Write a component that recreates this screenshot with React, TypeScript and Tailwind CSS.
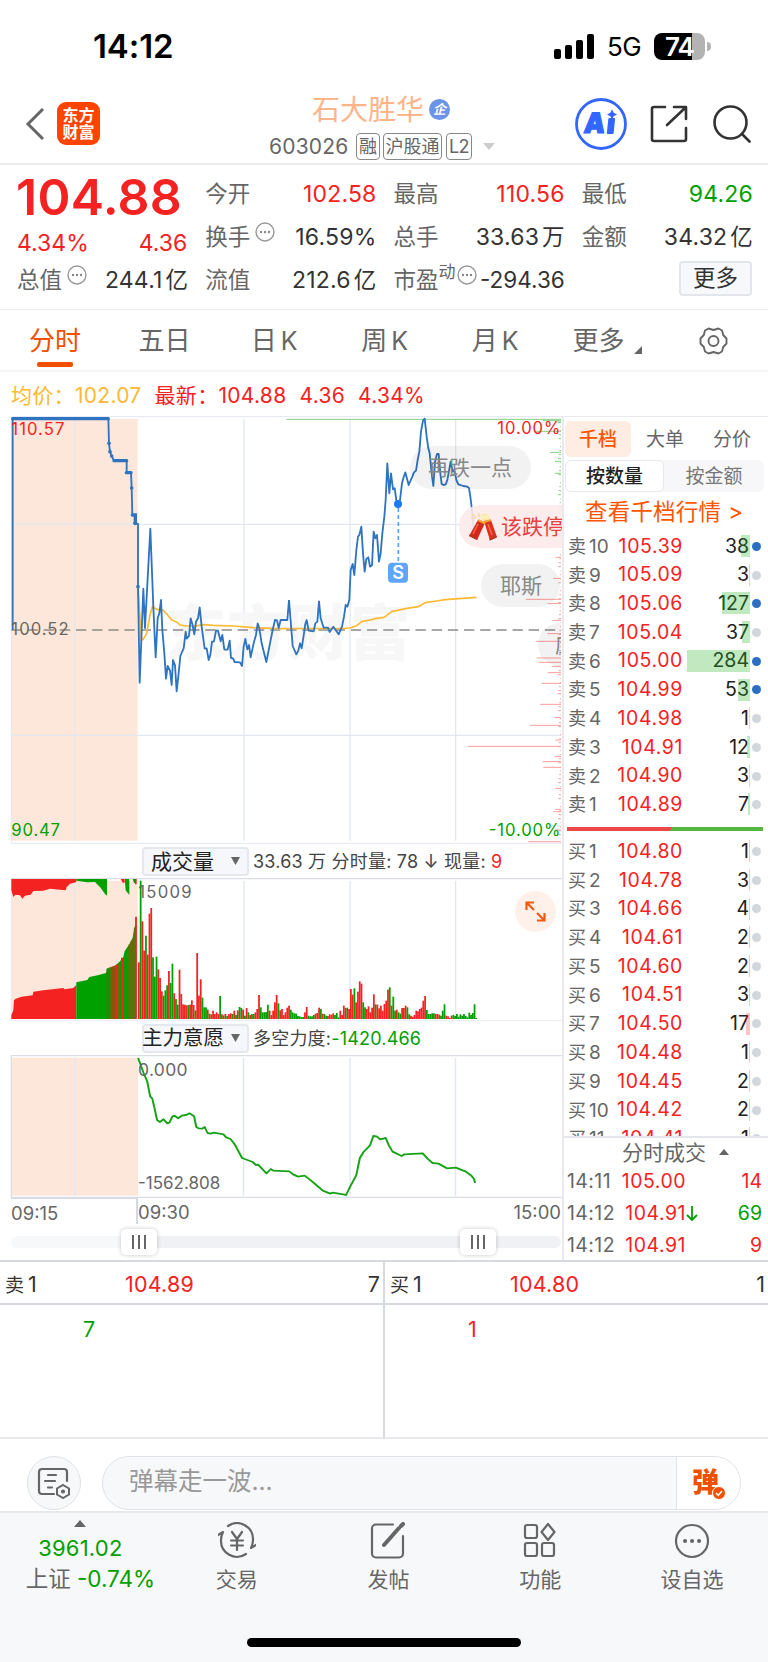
import type { ReactNode } from 'react'

const RED = '#f52222'
const GREEN = '#00a000'

const morning =
  '38,690 38,56 325,56 327,130 330,155 335,168 342,182 380,183 380,218 393,219 395,264 397,345 406,345 405,370 414,372 414,560 419,848 430,566 435,684 451,386 460,620 467,772 473,655 478,640 483,600 487,690 493,760 498,836 503,798 510,812 515,855 519,780 525,796 530,874 537,810 541,768 551,745 557,695 560,716 567,708 572,655 577,672 583,703 588,665 594,655 599,622 605,680 614,746 620,745 626,780 631,765 636,725 642,724 648,692 654,692 662,724 667,705 673,749 683,749 689,722 693,774 699,775 704,786 720,787 726,798 731,740 736,717 742,748 747,735 752,772 762,725 768,705 773,670 778,685 785,730 799,786 810,730 818,690 825,660 831,661 836,684 842,660 862,660 867,600'

const afternoon =
  '27,600 35,700 38,738 49,763 55,752 60,730 65,745 72,700 76,672 80,660 86,692 101,694 106,670 112,665 117,604 122,655 131,683 144,683 149,696 160,680 176,703 186,680 192,650 197,615 202,620 208,600 212,510 218,492 223,525 229,450 234,410 238,405 244,380 249,460 254,515 259,477 265,472 270,500 276,496 281,395 286,415 291,405 297,485 302,460 307,400 313,350 317,300 322,190 328,280 333,220 339,268 344,265 349,300 355,310 360,300 366,250 370,235 376,217 386,255 397,230 402,217 408,212 413,180 418,155 423,95 429,62 434,56 440,110 445,145 449,160 455,220 460,258 465,185 471,162 476,162 481,220 485,252 490,255 497,253 502,240 512,185 518,215 523,210 529,240 535,253 550,258 562,260 567,264 571,290 576,330 581,385'

const average =
  '414,560 419,640 424,722 430,717 440,700 450,645 457,620 470,628 490,631 503,645 515,660 530,666 540,675 560,678 590,678 605,674 640,676 700,678 760,683 830,686 1035,685 1050,684 1070,677 1085,665 1110,660 1125,656 1152,652 1175,635 1220,625 1255,620 1275,608 1310,603 1335,599 1430,592'

const intent =
  '380,130 395,175 405,200 413,245 419,252 427,290 432,316 440,322 450,314 460,326 466,324 474,306 480,303 490,311 500,303 512,301 521,296 534,305 540,337 546,341 556,342 563,337 571,355 580,357 588,354 615,359 622,368 634,373 645,388 655,408 666,430 695,442 704,451 710,450 733,476 745,463 752,468 796,470 806,479 820,486 838,483 855,497 870,511 888,528 908,537 915,534 948,540 952,541 965,512 980,482 990,430 1000,412 1018,392 1027,364 1036,365 1046,374 1061,370 1070,393 1080,411 1105,424 1112,419 1163,416 1176,432 1190,445 1206,447 1230,461 1254,459 1280,470 1297,483 1304,493 1307,505'

// one bar per minute from 09:30, negative = falling minute
const volume = [
  170, -415, 293, 205, -250, 193, 316, 333, -185, -127, -187, 149, 123, 83, -70, -86, -101, 144, -108, -166, 77, -60, -43,
  148, 75, 44, 43, 41, -42, 43, 56, 42, -26, 198, 70, 119, -64, -35, -35, 28, -16, 14, 25, 15, 20, 15, -69, 14, -11, 15, -9,
  15, 17, -15, 25, -12, 26, -36, -33, 28, -10, 33, -20, 12, -15, -15, 20, 30, 72, -35, -20, -20, -21, -43, 25, 12, 25, 50,
  72, -47, 26, 30, 12, 20, 34, 40, -28, -20, -17, -16, -9, -8, -6, -6, 20, 36, -10, -8, -8, -12, 16, 18, 34,
  -30, 16, -15, -10, 9, 14, 13, 17, -12, -18, -5, 25, 12, 40, 33, -34, 30, 90, 73, -92, 50, 82, 113, 106, -50, -35, 30, 38,
  20, 34, 74, -44, 43, 32, 40, 25, 45, 55, 88, -95, 40, -67, -25, 28, -20, -16, 33, 33, 40, -35, -14, 10, 7, 12, 25, 23, 30,
  34, 55, 69, -27, -15, -15, -17, -17, 15, 15, 13, -10, -25, -44, 10, 8, 3, 10, -12, -9, -15, -7, -14, -10, -15, -9, -5,
  -19, -12, -18, -44, -3,
]

// [y, left edge] of the price distribution ticks
const greenTicks = [
  [58, 19], [62, 788], [66, 826], [94, 765], [157, 810], [184, 825], [220, 825], [382, 785], [408, 762],
]
const redTicks = [
  [472, 827], [535, 820], [598, 738], [611, 803], [661, 817], [701, 802], [724, 768], [774, 770], [787, 776], [799, 816],
  [818, 803], [850, 785], [881, 833], [913, 780], [953, 824], [976, 750], [1020, 826], [1039, 563], [1070, 824],
  [1085, 788], [1102, 790], [1165, 826], [1228, 826], [1235, 820], [1290, 825], [1325, 745],
]

interface Level {
  label: string
  price: string
  qty: number
  bar: number
  active?: boolean
}

const sells: Level[] = [
  { label: '10', price: '105.39', qty: 38, bar: 9, active: true },
  { label: '9', price: '105.09', qty: 3, bar: 1 },
  { label: '8', price: '105.06', qty: 127, bar: 28, active: true },
  { label: '7', price: '105.04', qty: 37, bar: 8 },
  { label: '6', price: '105.00', qty: 284, bar: 63, active: true },
  { label: '5', price: '104.99', qty: 53, bar: 12, active: true },
  { label: '4', price: '104.98', qty: 1, bar: 1 },
  { label: '3', price: '104.91', qty: 12, bar: 3 },
  { label: '2', price: '104.90', qty: 3, bar: 1 },
  { label: '1', price: '104.89', qty: 7, bar: 2 },
]

const buys: Level[] = [
  { label: '1', price: '104.80', qty: 1, bar: 1 },
  { label: '2', price: '104.78', qty: 3, bar: 1 },
  { label: '3', price: '104.66', qty: 4, bar: 1 },
  { label: '4', price: '104.61', qty: 2, bar: 1 },
  { label: '5', price: '104.60', qty: 2, bar: 1 },
  { label: '6', price: '104.51', qty: 3, bar: 1 },
  { label: '7', price: '104.50', qty: 17, bar: 4 },
  { label: '8', price: '104.48', qty: 1, bar: 1 },
  { label: '9', price: '104.45', qty: 2, bar: 1 },
  { label: '10', price: '104.42', qty: 2, bar: 1 },
  { label: '11', price: '104.41', qty: 1, bar: 1 },
]

function StatusBar() {
  return (
    <div className="flex h-[84px] items-center justify-between pl-[93px] pr-[57px] pt-[9px]">
      <span className="text-[33px] font-semibold leading-none tracking-[-0.1px] text-black">14:12</span>
      <div className="flex items-center">
        <svg width="40" height="26" viewBox="0 0 40 26">
          <rect x="0" y="15" width="7" height="10" rx="2" />
          <rect x="11" y="11" width="7" height="14" rx="2" />
          <rect x="22" y="6" width="7" height="19" rx="2" />
          <rect x="33" y="0" width="7" height="25" rx="2" />
        </svg>
        <span className="ml-[13px] w-[34px] whitespace-nowrap text-[26px] leading-none tracking-[-0.5px]">5G</span>
        <div className="ml-[13px] flex items-center">
          <div className="flex h-[27px] w-[51px] items-center justify-center rounded-[8px] bg-[linear-gradient(90deg,#000_74%,#b3b3b3_74%)] text-[26px] font-semibold leading-none tracking-[-1px] text-white">
            74
          </div>
          <div className="ml-[2px] h-[9px] w-[4px] rounded-r-full bg-[#b3b3b3]" />
        </div>
      </div>
    </div>
  )
}

function Header() {
  return (
    <header className="flex h-[81px] items-center border-b-2 border-[#ededed] pl-[25px]">
      <svg className="shrink-0" width="20" height="32" viewBox="0 0 20 32" fill="none" stroke="#666" strokeWidth="3">
        <path d="M18 1 3 16l15 15" />
      </svg>
      <div className="ml-3 flex h-[43px] w-[43px] shrink-0 flex-col items-center justify-center rounded-[9px] bg-[#ff4400] text-[16px] font-bold leading-[17px] text-white">
        <span>东方</span>
        <span>财富</span>
      </div>
      <div className="ml-[169px] flex w-[226px] shrink-0 flex-col pt-[5px]">
        <div className="flex h-[36px] items-center pl-[43px]">
          <span className="text-[28px] leading-none text-[#ffb48a]">石大胜华</span>
          <span className="ml-[5px] flex h-[21px] w-[21px] items-center justify-center rounded-full bg-[#6b93e8] text-[13px] font-bold italic leading-none text-white">
            企
          </span>
        </div>
        <div className="mt-[5px] flex h-[28px] items-center text-[21px] leading-none text-[#666]">
          <span className="w-[87px] whitespace-nowrap tracking-[0.2px]">603026</span>
          <span className="flex h-[27px] w-[24px] items-center justify-center rounded-[4px] border border-[#888] text-[18px]">融</span>
          <span className="ml-[3px] flex h-[27px] w-[59px] items-center justify-center rounded-[4px] border border-[#888] text-[18px]">沪股通</span>
          <span className="ml-[4px] flex h-[27px] w-[26px] items-center justify-center rounded-[4px] border border-[#888] text-[18px] tracking-[-0.5px]">L2</span>
          <svg className="ml-[11px]" width="12" height="7" viewBox="0 0 12 7" fill="#ccc">
            <path d="M0 0h12L6 7z" />
          </svg>
        </div>
      </div>
      <svg className="ml-[80px] shrink-0" width="52" height="52" viewBox="0 0 52 52">
        <circle cx="26" cy="26" r="24.500" fill="#fff" stroke="#3366ff" strokeWidth="2.800" />
        <g transform="translate(4 0) skewX(-6)" fill="#3366ff">
          <text x="8" y="35" fontSize="28" fontWeight="900" stroke="#3366ff" strokeWidth="1.200" textLength="21" lengthAdjust="spacingAndGlyphs">A</text>
          <rect x="31.500" y="20" width="6.800" height="16" rx="1" />
        </g>
        <path d="M37 11.500l1.700 3.300 3.300 1.700-3.300 1.700-1.700 3.300-1.700-3.300-3.300-1.700 3.300-1.700z" fill="#3366ff" />
      </svg>
      <svg className="ml-[23px] shrink-0" width="38" height="38" viewBox="0 0 38 38" fill="none" stroke="#333" strokeWidth="2.600" strokeLinecap="round" strokeLinejoin="round">
        <path d="M15 2H4a2 2 0 0 0-2 2v30a2 2 0 0 0 2 2h30a2 2 0 0 0 2-2V23" />
        <path d="M24 2h12v12M35 3 17 20" />
      </svg>
      <svg className="ml-[25px] shrink-0" width="38" height="38" viewBox="0 0 38 38" fill="none" stroke="#333" strokeWidth="2.600" strokeLinecap="round">
        <circle cx="17.500" cy="17.500" r="16" />
        <path d="m29 29 7.500 7.500" />
      </svg>
    </header>
  )
}

function MoreDots() {
  return (
    <svg className="mb-3 ml-[5px] shrink-0" width="20" height="20" viewBox="0 0 20 20">
      <circle cx="10" cy="10" r="9" fill="none" stroke="#999" strokeWidth="1.400" />
      <circle cx="6" cy="10" r="1.200" fill="#888" />
      <circle cx="10" cy="10" r="1.200" fill="#888" />
      <circle cx="14" cy="10" r="1.200" fill="#888" />
    </svg>
  )
}

interface StatProps {
  label: string
  value: string
  unit?: string
  tone?: string
  dots?: boolean
}

function Stat({ label, value, unit, tone = 'text-[#333]', dots }: StatProps) {
  return (
    <div className="flex h-[43px] items-center whitespace-nowrap text-[22.500px] leading-none">
      <span className="text-[#666]">{label}</span>
      {dots && <MoreDots />}
      <span className={`-mr-px ml-auto text-[23px] tracking-[0.2px] ${tone}`}>
        {value}
        {unit && <span className="ml-[3px] text-[22.500px]">{unit}</span>}
      </span>
    </div>
  )
}

function Quote() {
  return (
    <section className="grid h-[145px] grid-cols-4 gap-x-[18px] border-b border-[#eee] pl-[17px] pr-[16px] pt-[8px]">
      <div>
        <div className="h-[86px] text-[#f52222]">
          <div className="-ml-px flex h-[48px] items-center text-[50px] font-semibold leading-none tracking-[0.3px]">104.88</div>
          <div className="mt-[11px] flex items-center justify-between text-[23px] leading-none">
            <span>4.34%</span>
            <span>4.36</span>
          </div>
        </div>
        <Stat label="总值" value="244.1" unit="亿" dots />
      </div>
      <div>
        <Stat label="今开" value="102.58" tone="text-[#f52222]" />
        <Stat label="换手" value="16.59%" dots />
        <Stat label="流值" value="212.6" unit="亿" />
      </div>
      <div>
        <Stat label="最高" value="110.56" tone="text-[#f52222]" />
        <Stat label="总手" value="33.63" unit="万" />
        <div className="flex h-[43px] items-center whitespace-nowrap text-[22.500px] leading-none">
          <span className="text-[#666]">市盈</span>
          <span className="mb-4 text-[17px] text-[#666]">动</span>
          <span className="-ml-[4px] flex"><MoreDots /></span>
          <span className="-mr-px ml-auto text-[#333]">-294.36</span>
        </div>
      </div>
      <div>
        <Stat label="最低" value="94.26" tone="text-[#00a000]" />
        <Stat label="金额" value="34.32" unit="亿" />
        <button className="ml-auto mt-[2px] flex h-[35px] w-[73px] items-center justify-center rounded-[4px] border-2 border-[#e3e5ec] bg-[#f7f8fb] text-[22.500px] leading-none text-[#333]">
          更多
        </button>
      </div>
    </section>
  )
}

function PeriodTabs() {
  return (
    <nav className="flex h-[62px] items-start border-b-2 border-[#f5f5f5] text-[26px] leading-none text-[#666]">
      <div className="flex w-[110px] flex-col items-center pt-[18px] text-[#f05000]">
        <span>分时</span>
        <span className="mt-[8px] h-[5px] w-[36px] rounded-[2px] bg-[#f05000]" />
      </div>
      <span className="w-[109px] pt-[18px] text-center">五日</span>
      {['日', '周', '月'].map((unit) => (
        <span key={unit} className="w-[110.500px] pt-[18px] text-center">
          {unit}
          <span className="ml-[4px] text-[25px]">K</span>
        </span>
      ))}
      <div className="flex w-[111px] items-end pl-[22px] pt-[18px]">
        <span>更多</span>
        <svg className="ml-[9px]" width="8" height="8" viewBox="0 0 8 8" fill="#666">
          <path d="M8 0v8H0z" />
        </svg>
      </div>
      <svg className="ml-[37px] mt-[17px]" width="29" height="28" viewBox="0 0 29 28" fill="none" stroke="#666" strokeWidth="1.900" strokeLinejoin="round">
        <path d="M9.500 1.500 14.500 3l5-1.500 3.500 2 1.200 4.500 3.300 3.500v5L24.200 20 23 24.500l-3.500 2-5-1.500-5 1.500-3.500-2L4.800 20 1.500 16.500v-5L4.800 8 6 3.500z" />
        <circle cx="14.500" cy="14" r="5" />
      </svg>
    </nav>
  )
}

function PriceChart() {
  return (
    <div className="relative h-[428px] overflow-hidden">
      <svg className="block" width="562" height="428" viewBox="0 48 1686 1284" fill="none">
        <rect x="34" y="57" width="379" height="1265" fill="#fde6da" />
        <g stroke="#e3e7f0" strokeWidth="4">
          <path d="M34 50H1686M34 1330H1686M34 50V1330" strokeWidth="3" />
          <path d="M34 373H1684M34 1006H1684M224 57V1322M732 57V1322M1050 57V1322M1367 57V1322" />
        </g>
        <text x="496" y="766" fontSize="182" fontWeight="900" fill="#f7f7f8" textLength="735">东方财富</text>
        <path d="M34 690H1684" stroke="#8c8c8c" strokeWidth="5" strokeDasharray="31 17.500" />
        <g transform="translate(840 0)" strokeWidth="3">
          {greenTicks.map(([y, x]) => (
            <path key={y} d={`M${x} ${y}H843`} stroke="#83d183" />
          ))}
          {redTicks.map(([y, x]) => (
            <path key={y} d={`M${x} ${y}H843`} stroke="#ff9c9c" />
          ))}
          {Array.from({ length: 105 }, (_, i) => (
            <path
              key={i}
              d={`M${834 + ((i * 7) % 9)} ${68 + i * 12}H843`}
              stroke={i < 29 ? '#83d183' : '#ff9c9c'}
            />
          ))}
        </g>
        <polyline points={average} stroke="#fdb933" strokeWidth="5" strokeLinejoin="round" />
        <polyline points={morning} stroke="#2f74c0" strokeWidth="5.500" strokeLinejoin="round" />
        <path d="M38 56H325M342 182H380M379 218H393M397 345H406V370" stroke="#2f74c0" strokeWidth="10" strokeLinecap="round" />
        {[[327, 130], [330, 155], [335, 168], [395, 264], [405, 370], [414, 560]].map(([cx, cy]) => (
          <circle key={cy} cx={cx} cy={cy} r="5.500" fill="#2f74c0" />
        ))}
        <g transform="translate(840 0)">
          <polyline points={afternoon} stroke="#2f74c0" strokeWidth="5.500" strokeLinejoin="round" />
          <path d="M355 324V488" stroke="#5ba0f8" strokeWidth="5" strokeDasharray="12 9" />
          <circle cx="354" cy="312" r="12" fill="#1f7bf5" />
          <rect x="324" y="488" width="60" height="60" rx="12" fill="#5fa5fb" />
          <text x="354" y="537" fontSize="54" fontWeight="600" fill="#fff" textAnchor="middle">S</text>
        </g>
        <g fontSize="50">
          <text x="34" y="104" fill={RED} textLength="159">110.57</text>
          <text x="34" y="706" fill="#666" textLength="172">100.52</text>
          <text x="34" y="1309" fill={GREEN} textLength="146">90.47</text>
          <text x="1492" y="102" fill={RED} textLength="189">10.00%</text>
          <text x="1466" y="1309" fill={GREEN} textLength="215">-10.00%</text>
        </g>
      </svg>
      <div className="absolute left-[410px] top-[30px] flex h-[43px] w-[121px] items-center rounded-full bg-black/5 pl-[18px] text-[21px] leading-none text-[#888]">
        再跌一点
      </div>
      <div className="absolute left-[459px] top-[89px] flex h-[43px] w-[103px] items-center overflow-hidden whitespace-nowrap rounded-l-full bg-[#fdeaea]/90 pl-[9px] text-[21px] leading-none text-[#e84040]">
        <svg className="mr-[3px] shrink-0" width="30" height="30" viewBox="0 0 30 30">
          <path d="m4 2 4 3M10 1l2 4M3 6h5" stroke="#f7d9a8" strokeWidth="1.500" />
          <circle cx="17" cy="5" r="3.600" fill="#fbe59a" />
          <path d="m17 0 1 4 3-2-1.500 3.500L23 7h-12l3-1.500L12.500 2l3.500 2z" fill="#fdf0b5" />
          <path d="m10 8 7 3-8 17-8-4z" fill="#d5271a" />
          <path d="m16 9 7-1 6 17-7 3.500z" fill="#dc2f1f" />
          <path d="m10 8 7 3.500M16 10l7-2" stroke="#f0a636" strokeWidth="2" />
          <path d="m1.500 23 8 4M21.500 27.500l7-3" stroke="#b9351b" strokeWidth="2" />
          <path d="m10 12-5 10M20 12l4 11" stroke="#f96a4a" strokeWidth="1.500" />
        </svg>
        该跌停
      </div>
      <div className="absolute left-[481px] top-[148px] flex h-[43px] w-[79px] items-center rounded-full bg-black/5 pl-[19px] text-[21px] leading-none text-[#888]">
        耶斯
      </div>
      <div className="absolute left-[538px] top-[207px] flex h-[43px] w-[23px] items-center overflow-hidden whitespace-nowrap rounded-l-full bg-black/5 pl-[17px] text-[21px] leading-none text-[#888]">
        应
      </div>
    </div>
  )
}

function IndicatorBar({ name, children }: { name: string; children: ReactNode }) {
  return (
    <div className="flex h-[34px] items-center pl-[142px]">
      <div className="flex h-[29px] w-[107px] shrink-0 items-center justify-between whitespace-nowrap rounded-[4px] border-2 border-[#e4e7ee] bg-[#f6f7fa] text-[21px] leading-none text-[#222]">
        <span className={name.length > 3 ? '-ml-[2px] text-[20.500px]' : 'ml-[7px]'}>{name}</span>
        <svg className="mr-[7px]" width="9" height="8" viewBox="0 0 9 8" fill="#666">
          <path d="M0 0h9L4.500 8z" />
        </svg>
      </div>
      <div className="ml-[4px] flex items-center whitespace-pre pt-px text-[18px] leading-none tracking-[0.200px] text-[#444]">
        {children}
      </div>
    </div>
  )
}

function VolumeChart() {
  return (
    <div className="relative h-[143px]">
      <svg className="block" width="562" height="143" viewBox="0 113 1686 429" fill="none">
        <rect x="34" y="116" width="379" height="420" fill="#fde6da" />
        <path d="M34 541H1686M34 115V541" stroke="#e8eaf0" strokeWidth="3" />
        <path d="M34 115H1686" stroke="#dadde6" strokeWidth="4" />
        <path d="M224 122V536M732 122V536M1050 122V536M1367 122V536" stroke="#e3e7f0" strokeWidth="4" />
        <path d="M34 116V150L40 170 46 163 60 165 67 175 75 166 92 163 100 152 130 151 150 145 188 149 197 150 200 140 210 130 229 125V116z" fill={RED} />
        <path d="M229 116V121L262 126 285 125 300 140 318 165H321V116zM374 116 377 150 388 164V116z" fill={GREEN} />
        <path d="M321 119H374M388 119H400" stroke="#fff" strokeWidth="5" />
        <path d="M362 116 368 127H374V116zM405 116V132H410V116z" fill={RED} />
        <path d="M398 116 402 128H407V116z" fill={GREEN} />
        <path d="M34 536V525L40 510 42 480 47 475 65 469 98 465 100 454 130 450 190 443 193 447 220 443 229 434V536z" fill={RED} />
        <path d="M229 536V426L262 419 268 410 293 405 318 398 320 385 345 376 358 365 370 350 374 332 388 312 398 292 403 262 408 250V536z" fill={GREEN} />
        <path d="M322 384V536M328 381V536M333 379V536M338 378V536M343 376V536" stroke="#b83a12" strokeWidth="2.600" />
        <path d="M350 373V536M366 352V536" stroke={RED} strokeWidth="6" />
        <path d="M355 368V536M387 312V536M392 304V536M397 296V536M403 262V536" stroke="#8a5c10" strokeWidth="2.500" />
        <path d="M408 229V536" stroke={RED} strokeWidth="5.500" />
        <text x="415" y="173" fontSize="50" fill="#666" textLength="160">15009</text>
        {volume.map((v, i) => (
          <rect
            key={i}
            x={414 + i * 5.3}
            y={536 - Math.abs(v)}
            width="5.300"
            height={Math.abs(v)}
            fill={v > 0 ? RED : GREEN}
          />
        ))}
      </svg>
      <div className="absolute left-[515px] top-[13px] flex h-[41px] w-[41px] items-center justify-center rounded-full bg-[#fff1ea]">
        <svg width="21" height="21" viewBox="0 0 21 21" fill="none" stroke="#f05a10" strokeWidth="2.200">
          <path d="M1.500 9V1.500H9M2 2l7 7M19.500 12v7.500H12M19 19l-7-7" />
        </svg>
      </div>
    </div>
  )
}

function IntentChart() {
  return (
    <div className="relative h-[143px]">
      <svg className="block" width="562" height="143" viewBox="0 121 1546 429" preserveAspectRatio="none" fill="none">
        <rect x="31" y="129" width="349" height="414" fill="#fde6da" />
        <path d="M31 123H1546M31 548H1546M31 123V548" stroke="#dadde6" strokeWidth="3.500" />
        <path d="M206 129V543M670 129V543M963 129V543M1253 129V543" stroke="#e3e7f0" strokeWidth="4" />
        <polyline points={intent} stroke="#17a317" strokeWidth="5.500" strokeLinejoin="round" />
      </svg>
      <span className="absolute left-[138px] top-[6px] text-[17.500px] leading-none tracking-[0.300px] text-[#666]">0.000</span>
      <span className="absolute left-[138px] top-[120px] text-[17px] leading-none text-[#666]">-1562.808</span>
    </div>
  )
}

function Thumb() {
  return (
    <div className="flex h-[26px] w-[36px] items-center justify-center gap-[4px] rounded-[5px] bg-white shadow-[0_0_4px_rgba(0,0,0,0.22)]">
      <i className="h-[14px] w-[2px] bg-[#666]" />
      <i className="h-[14px] w-[2px] bg-[#666]" />
      <i className="h-[14px] w-[2px] bg-[#666]" />
    </div>
  )
}

function TimeAxis() {
  return (
    <div className="h-[62px]">
      <div className="ml-[11px] flex h-[26px] pt-[1px] text-[18.500px] leading-none text-[#666]">
        <div className="-mt-[2px] w-[127px] border-r-2 border-t-2 border-[#d5d8de] pt-[5px]">09:15</div>
        <div className="flex flex-1 justify-between pr-[1px] pt-[4px]">
          <span>09:30</span>
          <span>15:00</span>
        </div>
      </div>
      <div className="ml-[11px] mt-[12px] flex h-[12px] w-[550px] items-center rounded-full bg-[linear-gradient(90deg,#f7f8fa_20%,#f0f1f4_20%)]">
        <div className="ml-[110px]"><Thumb /></div>
        <div className="ml-[303px]"><Thumb /></div>
      </div>
    </div>
  )
}

function LevelRow({ side, level }: { side: '卖' | '买'; level: Level }) {
  return (
    <div className="relative flex h-[28.730px] items-center pl-[4px] text-[19px] leading-none">
      <span className="w-[47px] whitespace-nowrap text-[#666]">
        <span className="mr-[3px] text-[18px]">{side}</span>
        {level.label}
      </span>
      <span className="w-[68px] whitespace-nowrap text-right text-[19.500px] tracking-[0.600px] text-[#f52222]">{level.price}</span>
      <span className="flex-1 text-right text-[19.500px] text-[#222]">{level.qty}</span>
      <span className={`ml-[3px] mr-[7px] h-[9px] w-[9px] rounded-full ${level.active ? 'bg-[#2b6fc4]' : 'bg-[#d2d6dd]'}`} />
      <span
        className={`absolute right-[18px] top-[3px] h-[22px] ${side === '卖' ? 'bg-[#2fb52f]/30' : 'bg-[#ff4040]/30'}`}
        style={{ width: level.bar }}
      />
    </div>
  )
}

function OrderBook() {
  return (
    <aside className="flex h-[844px] w-[206px] flex-col border-l-2 border-[#e8eaf0]">
      <div className="flex h-[44px] shrink-0 border-t border-[#e8eaf0] pl-[1px] pt-[4px] text-[19px] leading-none text-[#666]">
        <span className="flex h-[36px] w-[66px] items-center justify-center rounded-[6px] bg-[#ffece2] font-medium text-[#ff5500]">千档</span>
        <span className="flex h-[36px] w-[68px] items-center justify-center">大单</span>
        <span className="flex h-[36px] w-[66px] items-center justify-center">分价</span>
      </div>
      <div className="ml-[1px] flex h-[32px] w-[199px] shrink-0 rounded-[6px] bg-[#f7f7f9] text-[19px] leading-none text-[#777]">
        <span className="flex w-[99px] items-center justify-center rounded-[6px] border border-[#e8e8ec] bg-white font-medium text-[#222]">按数量</span>
        <span className="flex flex-1 items-center justify-center">按金额</span>
      </div>
      <div className="flex h-[40px] shrink-0 items-center pl-[21px] pt-px text-[22.500px] leading-none tracking-[0.200px] text-[#ff5500]">
        查看千档行情<span className="ml-[7px]">&gt;</span>
      </div>
      <div>
        {sells.map((level) => (
          <LevelRow key={level.label} side="卖" level={level} />
        ))}
      </div>
      <div className="mb-[6px] ml-[3px] mt-[8px] h-[4px] w-[196px] shrink-0 bg-[linear-gradient(120deg,#ee4848_53%,#55b940_53%)]" />
      <div className="h-[301px] shrink-0 overflow-hidden border-b-2 border-[#e4e6eb]">
        {buys.map((level) => (
          <LevelRow key={level.label} side="买" level={level} />
        ))}
      </div>
      <div className="flex h-[28px] shrink-0 items-center pl-[58px] text-[21px] leading-none text-[#666]">
        分时成交
        <svg className="ml-[13px]" width="10" height="6" viewBox="0 0 10 6" fill="#666">
          <path d="M0 6h10L5 0z" />
        </svg>
      </div>
      {[
        { time: '14:11', price: '105.00', qty: 14, tone: 'text-[#f52222]' },
        { time: '14:12', price: '104.91', qty: 69, tone: 'text-[#00a000]', down: true },
        { time: '14:12', price: '104.91', qty: 9, tone: 'text-[#f52222]' },
      ].map((deal, i) => (
        <div key={i} className="flex h-[31.700px] shrink-0 items-center pl-[3px] pr-[6px] text-[19.500px] leading-none">
          <span className="w-[50px] tracking-[0.400px] text-[#666]">{deal.time}</span>
          <span className="w-[69px] text-right tracking-[0.500px] text-[#f52222]">{deal.price}</span>
          {deal.down && (
            <svg width="12" height="15" viewBox="0 0 12 15" fill="none" stroke="#00a000" strokeWidth="1.800">
              <path d="M6 0v14M1 9l5 5 5-5" />
            </svg>
          )}
          <span className={`ml-auto ${deal.tone}`}>{deal.qty}</span>
        </div>
      ))}
    </aside>
  )
}

function QueueCell({ name, price, qty, first, tone }: { name: string; price: string; qty: string; first: string; tone: string }) {
  return (
    <div className="flex-1 text-[21.500px] leading-none text-[#333]">
      <div className="flex h-[43px] items-center border-b-2 border-[#d6d9e0] pl-[5px] pr-[3px] pt-[5px]">
        <span className="w-[120px]">
          <span className="mr-[4px] text-[19px]">{name}</span>1
        </span>
        <span className="tracking-[0.200px] text-[#f52222]">{price}</span>
        <span className="ml-auto">{qty}</span>
      </div>
      <div className={`pl-[83px] pt-[14px] ${tone}`}>{first}</div>
    </div>
  )
}

function Composer() {
  return (
    <div className="flex h-[76px] items-center border-b-2 border-t-2 border-[#e6e8ec] pl-[27px] pt-[15px]">
      <div className="flex h-[54px] w-[54px] items-center justify-center rounded-full border border-[#dfe2e8] bg-[#f7f8fa]">
        <svg width="34" height="32" viewBox="0 0 34 32" fill="none" stroke="#666" strokeWidth="2.200" strokeLinecap="round">
          <path d="M17 27H5a3 3 0 0 1-3-3V5a3 3 0 0 1 3-3h22a3 3 0 0 1 3 3v9" />
          <path d="M11 8h8M8 14h10M11 20.500h4" />
          <path d="m26 18 6 3.500v6L26 31l-6-3.500v-6z" strokeWidth="2" />
          <circle cx="26" cy="24.500" r="1" />
        </svg>
      </div>
      <div className="ml-[21px] flex h-[54px] w-[639px] overflow-hidden rounded-full border border-[#dfe2e8] bg-[#f7f8fa]">
        <span className="flex-1 pl-[26px] pt-[12px] text-[24.500px] leading-none text-[#999]">弹幕走一波...</span>
        <div className="relative w-[64px] border-l border-[#dfe2e8] bg-white">
          <span className="absolute left-[15px] top-[12px] text-[27px] font-black leading-none text-[#f05000]">弹</span>
          <svg className="absolute left-[35px] top-[29px]" width="14" height="14" viewBox="0 0 14 14">
            <circle cx="7" cy="7" r="6.500" fill="#f05000" stroke="#fff" />
            <path d="m4 7 2.300 2.300L10 5" fill="none" stroke="#fff" strokeWidth="1.500" />
          </svg>
        </div>
      </div>
    </div>
  )
}

const navItems = [
  {
    label: '交易',
    icon: (
      <>
        <path d="M10 4a16 16 0 0 1 25 14c0 4-1 6-2 8l5-3M28 32A16 16 0 0 1 3 18c0-4 1-6 2-8L0 13" />
        <path d="m14 10 5 7 5-7M19 17v11M13 18.500h12M13 23.500h12" />
      </>
    ),
  },
  {
    label: '发帖',
    icon: (
      <>
        <path d="M24 2.500H7a4 4 0 0 0-4 4v25a4 4 0 0 0 4 4h23a4 4 0 0 0 4-4V14" />
        <path d="m15 23 15-17M32 4l2-2" strokeWidth="4" />
      </>
    ),
  },
  {
    label: '功能',
    icon: (
      <>
        <rect x="4" y="3" width="12" height="13" rx="2" />
        <rect x="4" y="21" width="12" height="13" rx="2" />
        <rect x="21" y="21" width="12" height="13" rx="2" />
        <path d="m27 2 6.500 8L27 18l-6.500-8z" />
      </>
    ),
  },
  {
    label: '设自选',
    icon: (
      <>
        <circle cx="19" cy="19" r="16" />
        <path d="M12 19h.1M19 19h.1M26 19h.1" strokeWidth="4" />
      </>
    ),
  },
]

function BottomNav() {
  return (
    <footer className="h-[149px] bg-[#f7f8fa]">
      <div className="flex h-[125px] text-[21px] leading-none text-[#666]">
        <div className="flex w-[161px] flex-col items-center pt-[7px] text-[22px]">
          <svg width="12" height="7" viewBox="0 0 12 7" fill="#666">
            <path d="M0 7h12L6 0z" />
          </svg>
          <span className="mt-[10px] tracking-[0.200px] text-[#00a000]">3961.02</span>
          <span className="mt-[9px] whitespace-nowrap pl-[20px] text-[22.500px]">
            上证 <span className="text-[#00a000]">-0.74%</span>
          </span>
        </div>
        {navItems.map((item) => (
          <div key={item.label} className="flex w-[152px] flex-col items-center pt-[9px]">
            <svg width="38" height="38" viewBox="0 0 38 38" fill="none" stroke="#666" strokeWidth="2.200" strokeLinecap="round" strokeLinejoin="round">
              {item.icon}
            </svg>
            <span className="mt-[9px]">{item.label}</span>
          </div>
        ))}
      </div>
      <div className="mx-auto h-[9px] w-[274px] rounded-full bg-black" />
    </footer>
  )
}

export default function App() {
  return (
    <div className="h-[1662px] w-[768px] overflow-hidden bg-white font-['Inter','Noto_Sans_CJK_SC',sans-serif]">
      <StatusBar />
      <Header />
      <Quote />
      <PeriodTabs />
      <div className="flex h-[44px] items-center gap-[13px] pl-[11px] pt-[2px] text-[21px] leading-none tracking-[0.300px] text-[#f52222]">
        <span className="text-[#fdb933]">均价：102.07</span>
        <span>最新：104.88</span>
        <span>4.36</span>
        <span>4.34%</span>
      </div>
      <div className="flex h-[844px]">
        <div className="w-[562px]">
          <PriceChart />
          <IndicatorBar name="成交量">
            33.63 万 分时量: 78 ↓ 现量: <span className="text-[#f52222]">9</span>
          </IndicatorBar>
          <VolumeChart />
          <IndicatorBar name="主力意愿">
            多空力度:<span className="text-[#00a000]">-1420.466</span>
          </IndicatorBar>
          <IntentChart />
          <TimeAxis />
        </div>
        <OrderBook />
      </div>
      <div className="flex h-[177px] border-t-2 border-[#d6d9e0]">
        <QueueCell name="卖" price="104.89" qty="7" first="7" tone="text-[#00a000]" />
        <div className="w-[2px] bg-[#d6d9e0]" />
        <QueueCell name="买" price="104.80" qty="1" first="1" tone="text-[#f52222]" />
      </div>
      <Composer />
      <BottomNav />
    </div>
  )
}
